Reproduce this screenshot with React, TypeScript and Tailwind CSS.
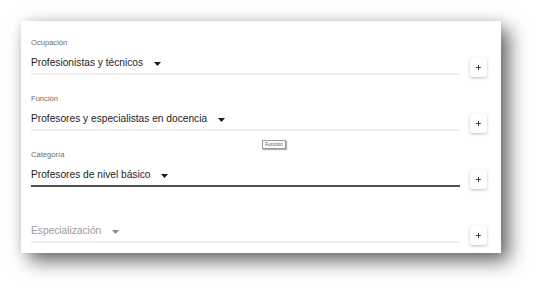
import { Plus } from 'lucide-react'

type Field = {
  label: string
  value: string
  placeholder?: boolean
  focused?: boolean
}

const fields: Field[] = [
  { label: 'Ocupación', value: 'Profesionistas y técnicos' },
  { label: 'Función', value: 'Profesores y especialistas en docencia' },
  { label: 'Categoría', value: 'Profesores de nivel básico', focused: true },
  { label: '', value: 'Especialización', placeholder: true },
]

function Caret({ muted }: { muted?: boolean }) {
  return (
    <svg width="7" height="4" viewBox="0 0 7 4" className="ml-[11px] mt-[1px]">
      <path d="M0 0h7L3.5 4z" fill={muted ? '#8a8a8a' : '#1a1a1a'} />
    </svg>
  )
}

function SelectRow({ field }: { field: Field }) {
  return (
    <div className="flex items-start h-[37px] mb-[19px] last:mb-0">
      <div className="flex-1">
        <div className="h-[10px] text-[7.6px] leading-[10px] text-[#6b6b6b]">{field.label}</div>
        <div
          className={
            'mt-[8px] pb-[3px] ' +
            (field.focused ? 'border-b-2 border-[#505050]' : 'border-b-2 border-[#f1efe8]')
          }
        >
          <div
            className={
              'flex items-center h-[14px] text-[10.2px] leading-[14px] ' +
              (field.placeholder ? 'text-[#9a9a9a]' : 'text-[#1e1e1e]')
            }
          >
            {field.value}
            <Caret muted={field.placeholder} />
          </div>
        </div>
      </div>
      <button className="ml-[10px] mt-[20px] w-[17px] h-[19px] shrink-0 flex items-center justify-center bg-white rounded-[2px] shadow-[0_1px_3px_rgba(0,0,0,0.25)]">
        <Plus className="w-[7px] h-[7px] text-[#222]" strokeWidth={3} />
      </button>
    </div>
  )
}

export default function App() {
  return (
    <div className="w-[543px] h-[296px] bg-white pt-[21px] pl-[21px] font-['Liberation_Sans',Arial,sans-serif]">
      <div className="relative w-[480px] h-[232px] bg-white pt-[17px] pl-[10px] pr-[14px] shadow-[8px_8px_18px_rgba(0,0,0,0.6),0_0_10px_rgba(0,0,0,0.08)]">
        {fields.map((f) => (
          <SelectRow key={f.value} field={f} />
        ))}

        {/* hover tooltip */}
        <div className="absolute left-[241px] top-[119px] px-[2px] h-[9px] flex items-center bg-white border border-[#9a9a9a] text-[5px] leading-none text-[#555] shadow-[1px_1px_1px_rgba(0,0,0,0.3)]">
          Función
        </div>
      </div>
    </div>
  )
}
